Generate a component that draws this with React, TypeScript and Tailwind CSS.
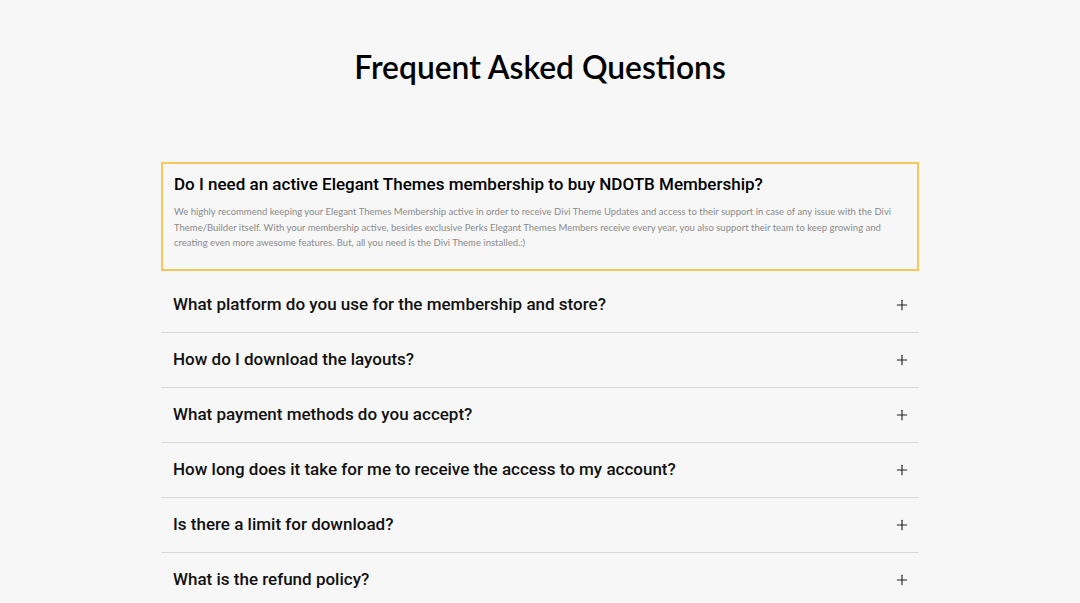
import { Plus } from 'lucide-react';

const QUESTIONS = [
  'What platform do you use for the membership and store?',
  'How do I download the layouts?',
  'What payment methods do you accept?',
  'How long does it take for me to receive the access to my account?',
  'Is there a limit for download?',
  'What is the refund policy?',
];

export default function App() {
  return (
    <div className="min-h-screen bg-[#f7f7f7] pt-[46px]">
      <h1 className="text-center text-[31.8px] leading-[42px] text-black font-semibold font-['Lato',sans-serif]">
        Frequent Asked Questions
      </h1>

      <div className="w-[758px] mx-auto mt-[74px]">
        {/* open item */}
        <div className="border-2 border-[#f6c85a] px-[11px] pt-[8px] pb-[18px]">
          <h3 className="text-[17px] leading-[24px] font-medium text-black font-['Roboto',sans-serif]">
            Do I need an active Elegant Themes membership to buy NDOTB Membership?
          </h3>
          <p className="mt-[8px] text-[9.5px] leading-[15.5px] text-[#8a8a8a] font-['Lato',sans-serif]">
            We highly recommend keeping your Elegant Themes Membership active in order to receive Divi Theme Updates and access to their support in case of any issue with the Divi Theme/Builder itself. With your membership active, besides exclusive Perks Elegant Themes Members receive every year, you also support their team to keep growing and creating even more awesome features. But, all you need is the Divi Theme installed.:)
          </p>
        </div>

        <div className="mt-[7px]">
          {QUESTIONS.map((q) => (
            <div
              key={q}
              className="flex items-center justify-between h-[55px] pl-[12px] pr-[9px] border-b-[1.5px] border-[#d9d9d9] last:border-0"
            >
              <span className="text-[17px] font-medium text-[#111] font-['Roboto',sans-serif]">{q}</span>
              <Plus className="w-[16px] h-[16px] text-[#222]" strokeWidth={1.7} />
            </div>
          ))}
        </div>
      </div>
    </div>
  );
}
